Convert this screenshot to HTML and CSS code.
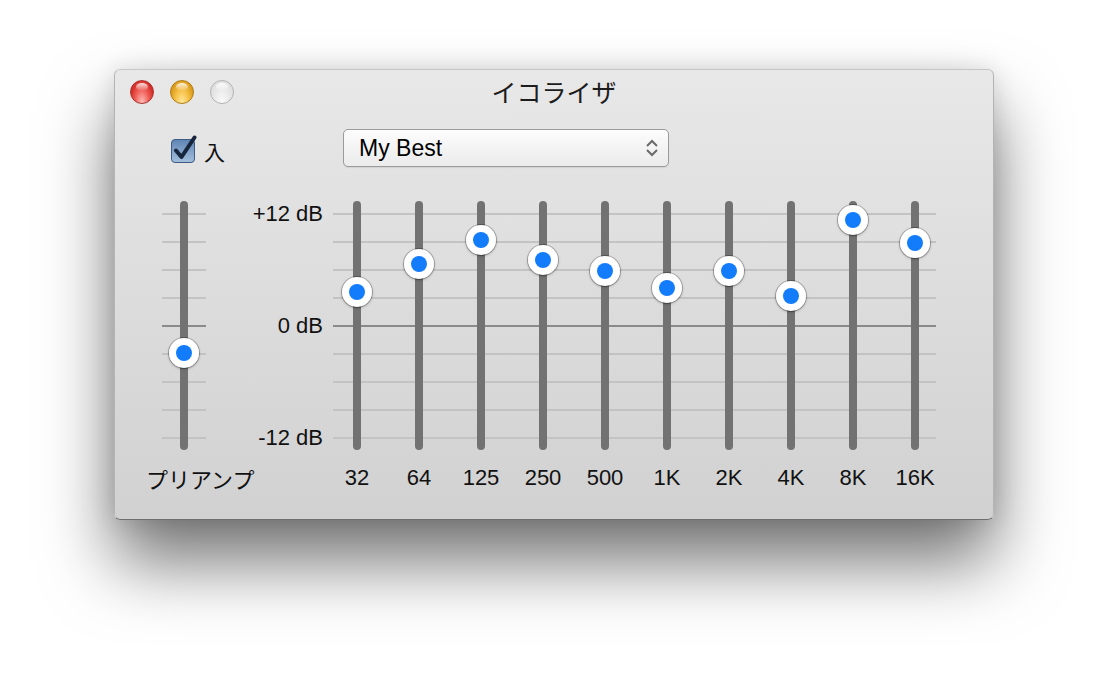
FILE: index.html
```html
<!DOCTYPE html>
<html lang="ja">

<head>
  <meta charset="UTF-8">
  <title>イコライザ</title>
  <link rel="stylesheet" href="styles.css">
</head>

<body>

  <div class="window">
    <!-- Title bar -->
    <div class="titlebar">
      <div class="lights">
        <span class="light close"></span>
        <span class="light minimize"></span>
        <span class="light zoom"></span>
      </div>
      <div class="title">イコライザ</div>
    </div>

    <!-- On/off + preset -->
    <div class="controls">
      <div class="toggle">
        <svg class="checkbox" width="28" height="28" viewBox="0 0 28 28">
          <defs>
            <linearGradient id="boxFill" x1="0" y1="0" x2="0" y2="1">
              <stop offset="0" stop-color="#5f85b4" />
              <stop offset="1" stop-color="#a3bfdc" />
            </linearGradient>
          </defs>
          <rect x="1.5" y="4.5" width="23" height="23" rx="3.5" fill="url(#boxFill)" stroke="#3c5c86" />
          <path d="M6 15.5 L11.5 22 L24.5 2.5" fill="none" stroke="#17253d" stroke-width="4" stroke-linecap="round" stroke-linejoin="round" />
        </svg>
        <span class="toggle-text">入</span>
      </div>
      <div class="preset">
        <span>My Best</span>
        <svg class="stepper" width="16" height="20" viewBox="0 0 16 20">
          <path d="M3 8 L8 3 L13 8" fill="none" stroke="#6a6a6a" stroke-width="2" />
          <path d="M3 12 L8 17 L13 12" fill="none" stroke="#6a6a6a" stroke-width="2" />
        </svg>
      </div>
    </div>

    <!-- Sliders -->
    <div class="eq">
      <div class="preamp">
        <div class="grid">
          <div class="track"><span class="knob" style="--db: -3"></span></div>
        </div>
        <div class="preamp-label">プリアンプ</div>
      </div>

      <div class="scale">
        <span>+12 dB</span>
        <span>0 dB</span>
        <span>-12 dB</span>
      </div>

      <div class="bands">
        <div class="band-grid">
          <div class="track"><span class="knob" style="--db: 3.6"></span></div>
          <div class="track"><span class="knob" style="--db: 6.6"></span></div>
          <div class="track"><span class="knob" style="--db: 9.2"></span></div>
          <div class="track"><span class="knob" style="--db: 7"></span></div>
          <div class="track"><span class="knob" style="--db: 5.8"></span></div>
          <div class="track"><span class="knob" style="--db: 4"></span></div>
          <div class="track"><span class="knob" style="--db: 5.8"></span></div>
          <div class="track"><span class="knob" style="--db: 3.2"></span></div>
          <div class="track"><span class="knob" style="--db: 11.3"></span></div>
          <div class="track"><span class="knob" style="--db: 8.8"></span></div>
        </div>
        <div class="band-labels">
          <span>32</span>
          <span>64</span>
          <span>125</span>
          <span>250</span>
          <span>500</span>
          <span>1K</span>
          <span>2K</span>
          <span>4K</span>
          <span>8K</span>
          <span>16K</span>
        </div>
      </div>
    </div>
  </div>

</body>

</html>
```

FILE: styles.css
```css
/* Equalizer window */

html {
  background-color: #fff;
}

body {
  box-sizing: border-box;
  min-height: 678px;
  margin: 0;
  padding: 69px 0 0 114px;
  overflow: hidden;
  font-family: "Liberation Sans", "Noto Sans CJK JP", sans-serif;
  color: #111;
}

.window {
  box-sizing: border-box;
  width: 880px;
  height: 451px;
  border: 1px solid #b4b4b4;
  border-top-color: #c6c6c6;
  border-bottom-color: #6f6f6f;
  border-radius: 6px;
  background: linear-gradient(#e8e8e8, #d1d1d1);
  box-shadow: 0 42px 70px rgba(0, 0, 0, 0.55), 0 0 24px rgba(0, 0, 0, 0.12);
}

/* Title bar */
.titlebar {
  height: 43px;
  display: grid;
  grid-template-columns: 1fr auto 1fr;
  align-items: center;
}

.lights {
  display: flex;
  gap: 16px;
  padding-left: 15px;
}

.light {
  position: relative;
  box-sizing: border-box;
  width: 24px;
  height: 24px;
  border-radius: 50%;
}

.light::before {
  content: "";
  position: absolute;
  left: 5px;
  top: 2px;
  width: 12px;
  height: 8px;
  border-radius: 50%;
  background: linear-gradient(rgba(255, 255, 255, 0.85), rgba(255, 255, 255, 0));
}

.close {
  border: 1px solid #a9302a;
  background: radial-gradient(ellipse at 50% 100%, #ffc1bb 0%, #f0645d 42%, #d8332d 72%, #b8211b 100%);
}

.minimize {
  border: 1px solid #b07b13;
  background: radial-gradient(ellipse at 50% 100%, #ffeaa0 0%, #f6c24a 42%, #e0a021 72%, #c0850f 100%);
}

.zoom {
  border: 1px solid #b3b3b3;
  background: radial-gradient(ellipse at 50% 100%, #fbfbfb 0%, #ebebeb 45%, #d8d8d8 100%);
}

.title {
  font-family: "Noto Sans CJK JP", sans-serif;
  font-size: 25px;
  line-height: 30px;
  margin-top: -2px;
  color: #1c1c1c;
}

/* Controls row */
.controls {
  display: flex;
  align-items: center;
  height: 38px;
  margin-top: 16px;
  padding-left: 55px;
}

.toggle {
  display: flex;
  align-items: center;
  gap: 6px;
  width: 173px;
  margin-top: 2px;
}

.toggle-text {
  font-family: "Noto Sans CJK JP", sans-serif;
  font-size: 21px;
  margin-top: 4px;
}

.preset {
  box-sizing: border-box;
  display: flex;
  align-items: center;
  justify-content: space-between;
  width: 326px;
  height: 38px;
  padding: 0 8px 0 15px;
  border: 1px solid #9b9b9b;
  border-radius: 5px;
  background: linear-gradient(#fdfdfd, #ebebeb);
  box-shadow: 0 1px 1px rgba(0, 0, 0, 0.08);
  font-size: 23px;
  color: #000;
}

/* Equalizer */
.eq {
  display: flex;
  margin-top: 34px;
  padding-left: 47px;
}

.grid,
.band-grid {
  height: 249px;
}

.preamp {
  width: 44px;
}

.preamp .grid {
  display: flex;
  justify-content: center;
  background:
    linear-gradient(#8a8a8a, #8a8a8a) 0 124px / 100% 2px no-repeat,
    linear-gradient(#c3c3c3 2px, transparent 2px) 0 12px / 100% 28px repeat-y;
}

.preamp-label {
  margin: 15px 0 0 -16px;
  white-space: nowrap;
  font-family: "Noto Sans CJK JP", sans-serif;
  font-size: 22px;
  line-height: 26px;
}

.scale {
  box-sizing: border-box;
  width: 120px;
  padding-right: 3px;
  display: flex;
  flex-direction: column;
  align-items: flex-end;
  gap: 87px;
  font-size: 22px;
  line-height: 25px;
}

.bands {
  width: 620px;
}

.band-grid {
  display: grid;
  grid-template-columns: repeat(10, 62px);
  justify-items: center;
  background:
    linear-gradient(#8a8a8a, #8a8a8a) 7px 124px / 603px 2px no-repeat,
    linear-gradient(#c3c3c3 2px, transparent 2px) 7px 12px / 603px 28px repeat-y;
}

.track {
  position: relative;
  width: 8px;
  height: 249px;
  border-radius: 4px;
  background-color: #727272;
}

.knob {
  position: absolute;
  left: 50%;
  top: calc(124.5px - var(--db) * 9.333px - 15px);
  width: 30px;
  height: 30px;
  margin-left: -15px;
  border-radius: 50%;
  background: radial-gradient(circle, #fff 60%, #f2f2f2 100%);
  box-shadow: 0 0 0 1px rgba(0, 0, 0, 0.24), 0 1px 3px rgba(0, 0, 0, 0.3);
}

.knob::after {
  content: "";
  position: absolute;
  left: 7px;
  top: 7px;
  width: 16px;
  height: 16px;
  border-radius: 50%;
  background-color: #127cfb;
}

.band-labels {
  display: grid;
  grid-template-columns: repeat(10, 62px);
  justify-items: center;
  margin-top: 15px;
  font-size: 22px;
  line-height: 26px;
}
```
